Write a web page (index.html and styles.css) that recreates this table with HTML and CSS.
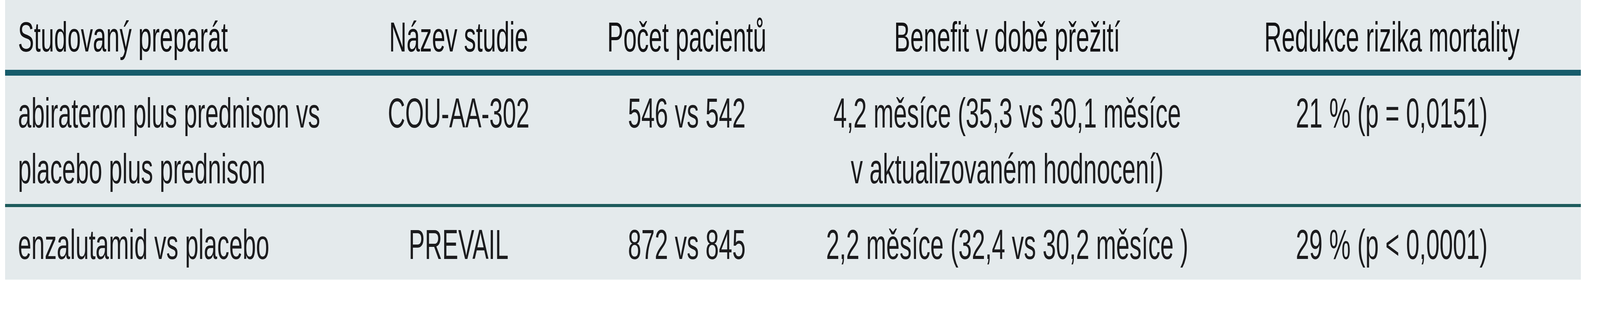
FILE: index.html
```
<!DOCTYPE html>
<html lang="cs">
<head>
<meta charset="utf-8">
<meta name="viewport" content="width=device-width, initial-scale=1">
<title>Přehled studií</title>
<link rel="stylesheet" href="styles.css">
</head>
<body>
<table class="trials">
  <colgroup>
    <col class="c1"><col class="c2"><col class="c3"><col class="c4"><col class="c5">
  </colgroup>
  <thead>
    <tr>
      <th class="left"><div class="cell"><span class="txt">Studovaný preparát</span></div></th>
      <th><div class="cell"><span class="txt">Název studie</span></div></th>
      <th><div class="cell"><span class="txt">Počet pacientů</span></div></th>
      <th><div class="cell"><span class="txt">Benefit v době přežití</span></div></th>
      <th><div class="cell"><span class="txt">Redukce rizika mortality</span></div></th>
    </tr>
  </thead>
  <tbody>
    <tr class="first">
      <td class="left"><div class="cell"><span class="txt">abirateron plus prednison vs<br>placebo plus prednison</span></div></td>
      <td><div class="cell"><span class="txt">COU-AA-302</span></div></td>
      <td><div class="cell"><span class="txt">546 vs 542</span></div></td>
      <td><div class="cell"><span class="txt">4,2 měsíce (35,3 vs 30,1 měsíce<br>v aktualizovaném hodnocení)</span></div></td>
      <td><div class="cell"><span class="txt">21 % (p = 0,0151)</span></div></td>
    </tr>
    <tr>
      <td class="left"><div class="cell"><span class="txt">enzalutamid vs placebo</span></div></td>
      <td><div class="cell"><span class="txt">PREVAIL</span></div></td>
      <td><div class="cell"><span class="txt">872 vs 845</span></div></td>
      <td><div class="cell"><span class="txt">2,2 měsíce (32,4 vs 30,2 měsíce )</span></div></td>
      <td><div class="cell"><span class="txt">29 % (p &lt; 0,0001)</span></div></td>
    </tr>
  </tbody>
</table>
</body>
</html>
```
FILE: styles.css
```
/* Designed for a 7185 x 800 window:
   horizontal sizes in vw (1vw = 71.85px), vertical sizes in vh (1vh = 8px) */
html, body {
  margin: 0;
  padding: 0;
  background: #ffffff;
}

.trials {
  margin-left: 0.3062vw;
  width: 98.497vw;
  table-layout: fixed;
  border-collapse: separate;
  border-spacing: 0;
  background: #e4eaec;
  font-family: "Liberation Sans", Arial, sans-serif;
  font-size: min(1.5031vw, 13.5vh);
  line-height: 17.875vh;
  color: #1c1c1e;
}

.c1 { width: 22.198%; }
.c2 { width: 13.169%; }
.c3 { width: 15.826%; }
.c4 { width: 24.813%; }
.c5 { width: 23.993%; }

.trials th,
.trials td {
  vertical-align: top;
  padding: 3vh 0 2.375vh 0;
}

.trials th {
  font-weight: normal;
  color: #141416;
  padding: 2.875vh 0 1.625vh 0;
  border-bottom: 1.875vh solid #175c6b;
}

.trials tr.first td {
  border-bottom: 1vh solid #1d5b5c;
}

.cell {
  display: flex;
  justify-content: center;
}

.txt {
  display: inline-block;
  white-space: nowrap;
  text-align: center;
  transform-origin: center center;
}

.trials .left {
  padding-left: 0.8072vw;
}

.left .cell {
  justify-content: flex-start;
}

.left .txt {
  text-align: left;
  transform-origin: left center;
}

/* keep the 7185 x 800 proportions of the text when the window is narrower:
   the text keeps its height and is condensed by the width ratio */
@supports (transform: scaleX(tan(atan2(1vw, 1vh)))) {
  .trials {
    font-size: 13.5vh;
  }
  .txt {
    transform: scaleX(tan(atan2(1.5031vw, 13.5vh)));
  }
}
```
